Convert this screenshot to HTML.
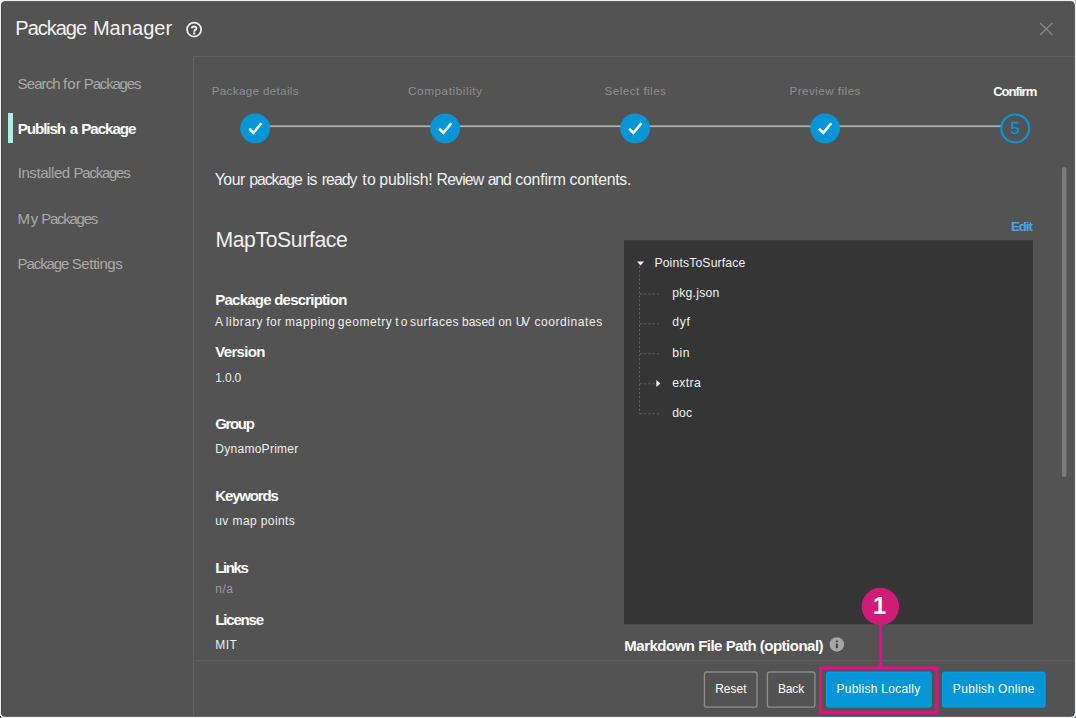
<!DOCTYPE html>
<html><head><meta charset="utf-8"><title>Package Manager</title>
<style>
html,body{margin:0;padding:0;}
body{width:1076px;height:718px;overflow:hidden;background:#f0f0f0;position:relative;font-family:"Liberation Sans",sans-serif;}
.t{position:absolute;white-space:nowrap;margin:0;padding:0;}
.r{position:absolute;margin:0;padding:0;}
svg{display:block;overflow:visible;}
</style></head><body>
<svg class="r" style="left:0;top:0" width="1076" height="718" viewBox="0 0 1076 718">
<rect x="1075" y="0" width="1" height="2" fill="#b4bcc4"/><rect x="0" y="716" width="1" height="1" fill="#1a1a1a"/><rect x="0" y="717" width="2" height="1" fill="#4e6b6b"/>
<rect x="1075" y="716" width="1" height="2" fill="#728b86"/><rect x="1074" y="717" width="1" height="1" fill="#a3b2ae"/>
<rect x="1.5" y="1.7" width="1072.8" height="714.5" rx="3" fill="#535353" stroke="#484848" stroke-width="1"/></svg>
<div class="t" style="left:15.30px;top:17px;font-size:20px;line-height:22px;height:22px;color:#f2f2f2;letter-spacing:-1.006px;">Package</div>
<div class="t" style="left:92.90px;top:17px;font-size:20px;line-height:22px;height:22px;color:#f2f2f2;letter-spacing:0.060px;">Manager</div>
<svg class="r" style="left:184px;top:19px" width="20" height="20" viewBox="184 19 20 20"><circle cx="194.1" cy="29.55" r="7.0" fill="#4d4d4d" stroke="#ececec" stroke-width="1.75"/><path d="M191.9 28.3 C191.9 26.0 196.4 26.0 196.4 28.2 C196.4 29.9 194.2 29.8 194.2 31.8" stroke="#f4f4f4" stroke-width="1.95" fill="none"/><rect x="193.15" y="32.5" width="2.1" height="1.9" fill="#f4f4f4"/></svg>
<svg class="r" style="left:1038px;top:21px" width="16" height="16" viewBox="0 0 16 16"><path d="M2 2 L14.4 14 M14.4 2 L2 14" stroke="#868686" stroke-width="1.35" fill="none"/></svg>
<div class="r" style="left:193px;top:56px;width:881px;height:1px;background:#626262;"></div>
<div class="r" style="left:193px;top:56px;width:1px;height:660px;background:#626262;"></div>
<div class="t" style="left:17.57px;top:75px;font-size:15px;line-height:17px;height:17px;color:#a9a9a9;letter-spacing:-0.886px;">Search</div>
<div class="t" style="left:63.08px;top:75px;font-size:15px;line-height:17px;height:17px;color:#a9a9a9;letter-spacing:0.047px;">for</div>
<div class="t" style="left:83.83px;top:75px;font-size:15px;line-height:17px;height:17px;color:#a9a9a9;letter-spacing:-1.182px;">Packages</div>
<div class="r" style="left:8px;top:113px;width:5px;height:30px;background:#b1ebe4;"></div>
<div class="t" style="left:17.72px;top:120px;font-size:15.2px;line-height:17px;height:17px;color:#ffffff;font-weight:700;letter-spacing:-1.071px;">Publish</div>
<div class="t" style="left:69.82px;top:120px;font-size:15.2px;line-height:17px;height:17px;color:#ffffff;font-weight:700;">a</div>
<div class="t" style="left:81.32px;top:120px;font-size:15.2px;line-height:17px;height:17px;color:#ffffff;font-weight:700;letter-spacing:-1.096px;">Package</div>
<div class="t" style="left:17.72px;top:164px;font-size:15px;line-height:17px;height:17px;color:#a9a9a9;letter-spacing:-0.428px;">Installed</div>
<div class="t" style="left:73.58px;top:164px;font-size:15px;line-height:17px;height:17px;color:#a9a9a9;letter-spacing:-1.254px;">Packages</div>
<div class="t" style="left:17.57px;top:210px;font-size:15px;line-height:17px;height:17px;color:#a9a9a9;letter-spacing:0.604px;">My</div>
<div class="t" style="left:41.33px;top:210px;font-size:15px;line-height:17px;height:17px;color:#a9a9a9;letter-spacing:-1.289px;">Packages</div>
<div class="t" style="left:17.57px;top:255px;font-size:15px;line-height:17px;height:17px;color:#a9a9a9;letter-spacing:-1.088px;">Package</div>
<div class="t" style="left:71.83px;top:255px;font-size:15px;line-height:17px;height:17px;color:#a9a9a9;letter-spacing:-0.479px;">Settings</div>
<svg class="r" style="left:250px;top:120px" width="770" height="12" viewBox="250 120 770 12"><rect x="255" y="125.35" width="760" height="1.8" fill="#b0b0b0"/></svg>
<div class="t" style="left:211.70px;top:84px;font-size:11.7px;line-height:13px;height:13px;color:#8f8f8f;letter-spacing:0.314px;">Package details</div>
<div class="t" style="left:408.10px;top:84px;font-size:11.7px;line-height:13px;height:13px;color:#8f8f8f;letter-spacing:0.585px;">Compatibility</div>
<div class="t" style="left:604.60px;top:84px;font-size:11.7px;line-height:13px;height:13px;color:#8f8f8f;letter-spacing:0.439px;">Select files</div>
<div class="t" style="left:789.50px;top:84px;font-size:11.7px;line-height:13px;height:13px;color:#8f8f8f;letter-spacing:0.444px;">Preview files</div>
<div class="t" style="left:993.20px;top:84px;font-size:13px;line-height:15px;height:15px;color:#ffffff;font-weight:700;letter-spacing:-0.972px;">Confirm</div>
<svg class="r" style="left:230px;top:105px" width="810" height="46" viewBox="230 105 810 46"><circle cx="255.2" cy="128.35" r="14.9" fill="#0696d7"/><path d="M249.10 128.75 L253.50 132.75 L261.40 123.25" stroke="#fff" stroke-width="2.6" fill="none"/><circle cx="445.1" cy="128.35" r="14.9" fill="#0696d7"/><path d="M439.00 128.75 L443.40 132.75 L451.30 123.25" stroke="#fff" stroke-width="2.6" fill="none"/><circle cx="635.2" cy="128.35" r="14.9" fill="#0696d7"/><path d="M629.10 128.75 L633.50 132.75 L641.40 123.25" stroke="#fff" stroke-width="2.6" fill="none"/><circle cx="825.1" cy="128.35" r="14.9" fill="#0696d7"/><path d="M819.00 128.75 L823.40 132.75 L831.30 123.25" stroke="#fff" stroke-width="2.6" fill="none"/><circle cx="1015.2" cy="128.4" r="13.9" fill="#535353" stroke="#0696d7" stroke-width="2.2"/><text x="1015.2" y="134.4" font-family="Liberation Sans, sans-serif" font-size="17" text-anchor="middle" fill="#0696d7" stroke="#0696d7" stroke-width="0.35">5</text></svg>
<svg class="r" style="left:1060px;top:160px" width="10" height="330" viewBox="1060 160 10 330"><rect x="1062" y="167" width="4.4" height="310" rx="2.2" fill="#7b7b7b"/></svg>
<div class="t" style="left:214.79px;top:171px;font-size:15.8px;line-height:17px;height:17px;color:#f0f0f0;letter-spacing:-0.501px;">Your</div>
<div class="t" style="left:249.29px;top:171px;font-size:15.8px;line-height:17px;height:17px;color:#f0f0f0;letter-spacing:-1.053px;">package</div>
<div class="t" style="left:306.79px;top:171px;font-size:15.8px;line-height:17px;height:17px;color:#f0f0f0;letter-spacing:-0.739px;">is</div>
<div class="t" style="left:321.79px;top:171px;font-size:15.8px;line-height:17px;height:17px;color:#f0f0f0;letter-spacing:-0.963px;">ready</div>
<div class="t" style="left:362.29px;top:171px;font-size:15.8px;line-height:17px;height:17px;color:#f0f0f0;letter-spacing:0.245px;">to</div>
<div class="t" style="left:379.29px;top:171px;font-size:15.8px;line-height:17px;height:17px;color:#f0f0f0;letter-spacing:-0.148px;">publish!</div>
<div class="t" style="left:436.59px;top:171px;font-size:15.8px;line-height:17px;height:17px;color:#f0f0f0;letter-spacing:-0.837px;">Review</div>
<div class="t" style="left:487.79px;top:171px;font-size:15.8px;line-height:17px;height:17px;color:#f0f0f0;letter-spacing:-1.220px;">and</div>
<div class="t" style="left:515.29px;top:171px;font-size:15.8px;line-height:17px;height:17px;color:#f0f0f0;letter-spacing:-0.188px;">confirm</div>
<div class="t" style="left:569.54px;top:171px;font-size:15.8px;line-height:17px;height:17px;color:#f0f0f0;letter-spacing:-0.293px;">contents.</div>
<div class="t" style="left:215.40px;top:228px;font-size:21.2px;line-height:23px;height:23px;color:#f0f0f0;letter-spacing:-0.382px;">MapToSurface</div>
<div class="t" style="left:215.30px;top:291px;font-size:15px;line-height:17px;height:17px;color:#ffffff;font-weight:700;letter-spacing:-0.772px;">Package description</div>
<div class="t" style="left:214.96px;top:315px;font-size:12px;line-height:14px;height:14px;color:#eeeeee;">A</div>
<div class="t" style="left:225.71px;top:315px;font-size:12px;line-height:14px;height:14px;color:#eeeeee;letter-spacing:0.693px;">library</div>
<div class="t" style="left:266.21px;top:315px;font-size:12px;line-height:14px;height:14px;color:#eeeeee;letter-spacing:0.538px;">for</div>
<div class="t" style="left:284.96px;top:315px;font-size:12px;line-height:14px;height:14px;color:#eeeeee;letter-spacing:0.674px;">mapping</div>
<div class="t" style="left:337.71px;top:315px;font-size:12px;line-height:14px;height:14px;color:#eeeeee;letter-spacing:0.580px;">geometry</div>
<div class="t" style="left:395.21px;top:315px;font-size:12px;line-height:14px;height:14px;color:#eeeeee;letter-spacing:2.322px;">to</div>
<div class="t" style="left:409.96px;top:315px;font-size:12px;line-height:14px;height:14px;color:#eeeeee;letter-spacing:0.461px;">surfaces</div>
<div class="t" style="left:461.96px;top:315px;font-size:12px;line-height:14px;height:14px;color:#eeeeee;letter-spacing:0.033px;">based</div>
<div class="t" style="left:498.21px;top:315px;font-size:12px;line-height:14px;height:14px;color:#eeeeee;letter-spacing:0.232px;">on</div>
<div class="t" style="left:515.71px;top:315px;font-size:12px;line-height:14px;height:14px;color:#eeeeee;letter-spacing:-2.341px;">UV</div>
<div class="t" style="left:534.46px;top:315px;font-size:12px;line-height:14px;height:14px;color:#eeeeee;letter-spacing:0.579px;">coordinates</div>
<div class="t" style="left:215.30px;top:343px;font-size:15px;line-height:17px;height:17px;color:#ffffff;font-weight:700;letter-spacing:-0.699px;">Version</div>
<div class="t" style="left:215.30px;top:371px;font-size:12px;line-height:14px;height:14px;color:#eeeeee;letter-spacing:-0.172px;">1.0.0</div>
<div class="t" style="left:215.30px;top:415px;font-size:15px;line-height:17px;height:17px;color:#ffffff;font-weight:700;letter-spacing:-1.373px;">Group</div>
<div class="t" style="left:215.30px;top:442px;font-size:12px;line-height:14px;height:14px;color:#eeeeee;letter-spacing:0.271px;">DynamoPrimer</div>
<div class="t" style="left:215.30px;top:487px;font-size:15px;line-height:17px;height:17px;color:#ffffff;font-weight:700;letter-spacing:-1.170px;">Keywords</div>
<div class="t" style="left:215.30px;top:514px;font-size:12px;line-height:14px;height:14px;color:#eeeeee;letter-spacing:0.399px;">uv map points</div>
<div class="t" style="left:215.30px;top:559px;font-size:15px;line-height:17px;height:17px;color:#ffffff;font-weight:700;letter-spacing:-1.395px;">Links</div>
<div class="t" style="left:215.30px;top:582px;font-size:12px;line-height:14px;height:14px;color:#9a9a9a;letter-spacing:0.459px;">n/a</div>
<div class="t" style="left:215.30px;top:611px;font-size:15px;line-height:17px;height:17px;color:#ffffff;font-weight:700;letter-spacing:-1.177px;">License</div>
<div class="t" style="left:215.30px;top:638px;font-size:12px;line-height:14px;height:14px;color:#eeeeee;letter-spacing:0.420px;">MIT</div>
<div class="t" style="left:1011.10px;top:219px;font-size:13.2px;line-height:15px;height:15px;color:#3cadea;font-weight:700;letter-spacing:-1.044px;">Edit</div>
<svg class="r" style="left:620px;top:236px" width="420" height="392" viewBox="620 236 420 392"><rect x="624" y="240.3" width="408.9" height="383.9" fill="#353535"/><g stroke="#606060" stroke-width="1" stroke-dasharray="2.1 2.1" fill="none"><line x1="639.5" y1="266" x2="639.5" y2="414"/><line x1="640" y1="294.0" x2="659" y2="294.0"/><line x1="640" y1="323.8" x2="659" y2="323.8"/><line x1="640" y1="353.8" x2="659" y2="353.8"/><line x1="640" y1="383.8" x2="659" y2="383.8"/><line x1="640" y1="413.8" x2="659" y2="413.8"/></g></svg>
<svg class="r" style="left:636px;top:260px" width="9" height="7" viewBox="0 0 9 7"><path d="M1 1.5 L8 1.5 L4.5 5.5 Z" fill="#f0f0f0"/></svg>
<svg class="r" style="left:655px;top:379px" width="7" height="9" viewBox="0 0 7 9"><path d="M1.3 1 L5.3 4.5 L1.3 8 Z" fill="#f0f0f0"/></svg>
<div class="t" style="left:654.40px;top:256px;font-size:12.2px;line-height:14px;height:14px;color:#f0f0f0;letter-spacing:0.154px;">PointsToSurface</div>
<div class="t" style="left:672.20px;top:286px;font-size:12.2px;line-height:14px;height:14px;color:#f0f0f0;letter-spacing:0.258px;">pkg.json</div>
<div class="t" style="left:672.20px;top:315px;font-size:12.2px;line-height:14px;height:14px;color:#f0f0f0;letter-spacing:0.738px;">dyf</div>
<div class="t" style="left:672.20px;top:346px;font-size:12.2px;line-height:14px;height:14px;color:#f0f0f0;letter-spacing:0.484px;">bin</div>
<div class="t" style="left:672.20px;top:376px;font-size:12.2px;line-height:14px;height:14px;color:#f0f0f0;letter-spacing:0.344px;">extra</div>
<div class="t" style="left:672.20px;top:406px;font-size:12.2px;line-height:14px;height:14px;color:#f0f0f0;letter-spacing:0.115px;">doc</div>
<div class="t" style="left:624.30px;top:637px;font-size:15px;line-height:17px;height:17px;color:#ffffff;font-weight:700;letter-spacing:-0.501px;">Markdown File Path (optional)</div>
<svg class="r" style="left:829px;top:637px" width="16" height="16" viewBox="0 0 16 16"><circle cx="7.85" cy="7.45" r="7.25" fill="#a6a6a6"/><rect x="6.85" y="6.6" width="2" height="4.6" fill="#3e3e3e"/><rect x="6.95" y="3.5" width="1.8" height="1.8" fill="#3e3e3e"/></svg>
<svg class="r" style="left:190px;top:656px" width="886" height="10" viewBox="190 656 886 10"><rect x="195" y="659.95" width="879" height="1.4" fill="#5e5e5e"/></svg>
<svg class="r" style="left:702.2px;top:668px" width="57.3" height="44" viewBox="702.2 668 57.3 44"><rect x="704.6" y="672.0" width="52.599999999999994" height="35.2" rx="2.2" fill="none" stroke="#8d8d8d" stroke-width="1.3"/></svg>
<div class="t" style="left:715.23px;top:682px;font-size:12.0px;line-height:14px;height:14px;color:#ffffff;letter-spacing:-0.025px;">Reset</div>
<svg class="r" style="left:765px;top:668px" width="52.2" height="44" viewBox="765 668 52.2 44"><rect x="767.4" y="672.0" width="47.5" height="35.2" rx="2.2" fill="none" stroke="#8d8d8d" stroke-width="1.3"/></svg>
<div class="t" style="left:777.98px;top:682px;font-size:12.0px;line-height:14px;height:14px;color:#ffffff;letter-spacing:-0.143px;">Back</div>
<svg class="r" style="left:823.5px;top:668px" width="109.7" height="44" viewBox="823.5 668 109.7 44"><rect x="826.0" y="672.1" width="104.7" height="35.0" rx="1.8" fill="#0696d7" stroke="#04a0e6" stroke-width="1"/></svg>
<div class="t" style="left:836.48px;top:682px;font-size:12.0px;line-height:14px;height:14px;color:#ffffff;letter-spacing:0.264px;">Publish Locally</div>
<svg class="r" style="left:939.8px;top:668px" width="107.6" height="44" viewBox="939.8 668 107.6 44"><rect x="942.3" y="672.1" width="102.6" height="35.0" rx="1.8" fill="#0696d7" stroke="#04a0e6" stroke-width="1"/></svg>
<div class="t" style="left:952.85px;top:682px;font-size:12.0px;line-height:14px;height:14px;color:#ffffff;letter-spacing:0.317px;">Publish Online</div>
<svg class="r" style="left:810px;top:580px" width="140" height="138" viewBox="810 580 140 138">
<rect x="820.5" y="668.0" width="116.25" height="44.6" fill="none" stroke="#e60e87" stroke-width="3"/>
<rect x="879.25" y="620" width="2.75" height="47" fill="#e60e87"/>
<circle cx="880.4" cy="606.5" r="18.7" fill="#d01b79"/>
<text x="879.6" y="613.9" font-family="Liberation Sans, sans-serif" font-weight="700" font-size="23.5" text-anchor="middle" fill="#fff">1</text>
</svg>
</body></html>
